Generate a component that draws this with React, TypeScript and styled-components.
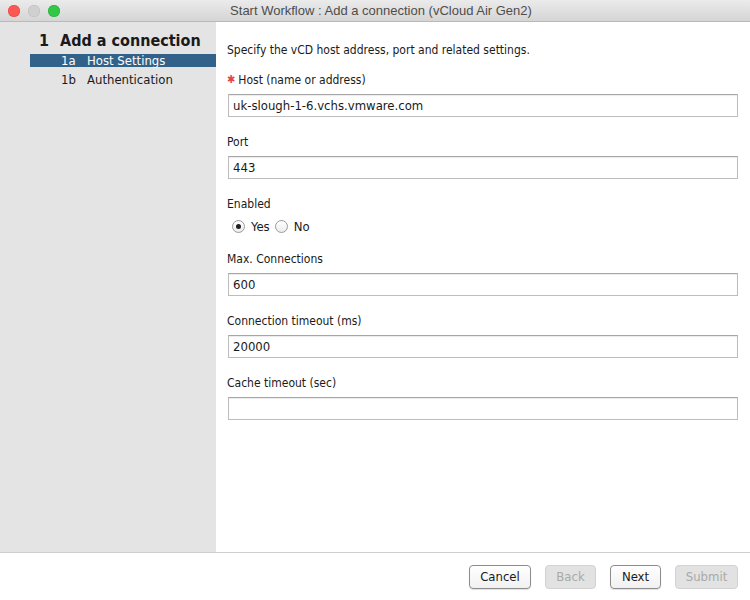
import * as React from 'react';
import styled, { createGlobalStyle } from 'styled-components';

const GlobalStyle = createGlobalStyle`
  html, body {
    margin: 0;
    padding: 0;
    background: #ffffff;
  }
  body {
    font-family: "DejaVu Sans Condensed", "DejaVu Sans", "Liberation Sans", sans-serif;
  }
`;

const Window = styled.div`
  width: 750px;
  height: 600px;
  display: flex;
  flex-direction: column;
  background: #fff;
  overflow: hidden;
`;

const TitleBar = styled.div`
  height: 22px;
  flex: none;
  display: flex;
  align-items: center;
  position: relative;
  background: linear-gradient(#ebebeb, #d5d5d5);
  border-bottom: 1px solid #b9b9b9;
  box-sizing: border-box;
`;

const Lights = styled.div`
  display: flex;
  gap: 8px;
  padding-left: 8px;
`;

const Light = styled.span<{ $color: string; $edge: string }>`
  width: 12px;
  height: 12px;
  border-radius: 50%;
  background: ${(p) => p.$color};
  box-shadow: inset 0 0 0 0.5px ${(p) => p.$edge};
`;

const Title = styled.div`
  position: absolute;
  left: 12px;
  right: 0;
  text-align: center;
  font-family: "Liberation Sans", Arial, sans-serif;
  font-size: 13px;
  color: #4d4d4d;
  pointer-events: none;
`;

const Body = styled.div`
  flex: 1;
  display: flex;
  min-height: 0;
`;

const Sidebar = styled.div`
  width: 216px;
  flex: none;
  background: #e4e4e4;
  padding-top: 8px;
  box-sizing: border-box;
`;

const StepHeading = styled.div`
  display: flex;
  align-items: center;
  height: 20px;
  font-size: 16px;
  font-weight: bold;
  color: #1a1a1a;
  white-space: nowrap;
  margin-bottom: 4px;
`;

const StepNum = styled.span`
  width: 49px;
  text-align: right;
  margin-right: 11px;
`;

const SubStep = styled.div<{ $active?: boolean }>`
  display: flex;
  align-items: center;
  height: 13px;
  margin-left: 30px;
  margin-bottom: 6px;
  font-size: 13px;
  white-space: nowrap;
  color: ${(p) => (p.$active ? '#ffffff' : '#1a1a1a')};
  background: ${(p) => (p.$active ? '#32628a' : 'transparent')};
`;

const SubNum = styled.span`
  padding-left: 31px;
  box-sizing: border-box;
  flex: none;
  width: 57px;
`;

const Content = styled.div`
  flex: 1;
  padding: 21px 12px 0 11px;
  display: flex;
  flex-direction: column;
  gap: 18px;
`;

const Intro = styled.div`
  font-size: 12px;
  line-height: 14px;
  color: #1a1a1a;
  margin-bottom: -2px;
`;

const Field = styled.div`
  display: flex;
  flex-direction: column;
  gap: 7px;
`;

const Label = styled.div`
  font-size: 12px;
  line-height: 14px;
  color: #1a1a1a;
  display: flex;
  align-items: center;
`;

const Required = styled.span`
  color: #e0474c;
  font-size: 11px;
  margin-right: 3px;
`;

const Input = styled.input`
  height: 23px;
  margin-left: 1px;
  box-sizing: border-box;
  border: 1px solid #bdbdbd;
  border-top-color: #a6a6a6;
  box-shadow: inset 0 1px 1px rgba(0, 0, 0, 0.08);
  padding: 0 4px;
  font-family: "DejaVu Sans Condensed", "DejaVu Sans", sans-serif;
  font-size: 13px;
  color: #1a1a1a;
  outline: none;
  background: #fff;
`;

const RadioRow = styled.div`
  height: 16px;
  display: flex;
  align-items: center;
  padding-left: 5px;
  font-size: 13px;
  color: #1a1a1a;
`;

const RadioLabel = styled.label`
  display: flex;
  align-items: center;
  gap: 6px;
  margin-right: 5px;
`;

const RadioDot = styled.span<{ $checked?: boolean }>`
  width: 13px;
  height: 13px;
  box-sizing: border-box;
  border-radius: 50%;
  border: 1px solid #9a9a9a;
  background: linear-gradient(#ffffff, #ececec);
  display: flex;
  align-items: center;
  justify-content: center;
  &::after {
    content: '';
    width: 5px;
    height: 5px;
    border-radius: 50%;
    background: #1e1e1e;
    display: ${(p) => (p.$checked ? 'block' : 'none')};
  }
`;

const Footer = styled.div`
  height: 48px;
  flex: none;
  border-top: 1px solid #cfcfcf;
  box-sizing: border-box;
  display: flex;
  align-items: center;
  justify-content: flex-end;
  gap: 14px;
  padding: 0 12px 0 0;
`;

const Button = styled.button<{ $w: number }>`
  width: ${(p) => p.$w}px;
  height: 24px;
  box-sizing: border-box;
  border-radius: 4px;
  font-family: "DejaVu Sans Condensed", "DejaVu Sans", sans-serif;
  font-size: 13px;
  padding: 0;
  border: 1px solid #8c8c8c;
  background: linear-gradient(#ffffff, #f1f1f1);
  color: #1a1a1a;
  box-shadow: 0 1px 1px rgba(0, 0, 0, 0.12);
  &:disabled {
    border-color: #d2d2d2;
    background: #e2e2e2;
    color: #a9a9a9;
    box-shadow: none;
  }
`;

const textFields = [
  { label: 'Max. Connections', value: '600' },
  { label: 'Connection timeout (ms)', value: '20000' },
  { label: 'Cache timeout (sec)', value: '' },
];

export default function App() {
  return (
    <>
      <GlobalStyle />
      <Window>
        <TitleBar>
          <Lights>
            <Light $color="#fc5753" $edge="#df4744" />
            <Light $color="#d0d0d0" $edge="#bcbcbc" />
            <Light $color="#33c748" $edge="#27aa35" />
          </Lights>
          <Title>Start Workflow : Add a connection (vCloud Air Gen2)</Title>
        </TitleBar>
        <Body>
          <Sidebar>
            <StepHeading>
              <StepNum>1</StepNum>
              Add a connection
            </StepHeading>
            <SubStep $active>
              <SubNum>1a</SubNum>
              Host Settings
            </SubStep>
            <SubStep>
              <SubNum>1b</SubNum>
              Authentication
            </SubStep>
          </Sidebar>
          <Content>
            <Intro>Specify the vCD host address, port and related settings.</Intro>
            <Field>
              <Label>
                <Required>✱</Required>Host (name or address)
              </Label>
              <Input defaultValue="uk-slough-1-6.vchs.vmware.com" />
            </Field>
            <Field>
              <Label>Port</Label>
              <Input defaultValue="443" />
            </Field>
            <Field>
              <Label>Enabled</Label>
              <RadioRow>
                <RadioLabel>
                  <RadioDot $checked />
                  Yes
                </RadioLabel>
                <RadioLabel>
                  <RadioDot />
                  No
                </RadioLabel>
              </RadioRow>
            </Field>
            {textFields.map((f) => (
              <Field key={f.label}>
                <Label>{f.label}</Label>
                <Input defaultValue={f.value} />
              </Field>
            ))}
          </Content>
        </Body>
        <Footer>
          <Button $w={62}>Cancel</Button>
          <Button $w={51} disabled>
            Back
          </Button>
          <Button $w={51}>Next</Button>
          <Button $w={63} disabled>
            Submit
          </Button>
        </Footer>
      </Window>
    </>
  );
}
